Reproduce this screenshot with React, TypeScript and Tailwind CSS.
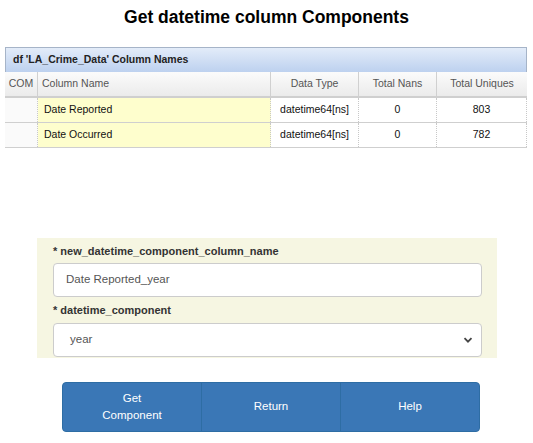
import React from "react";

const rows = [
  { name: "Date Reported", type: "datetime64[ns]", nans: "0", uniq: "803" },
  { name: "Date Occurred", type: "datetime64[ns]", nans: "0", uniq: "782" },
];

export default function App() {
  return (
    <div className="w-[533px] h-[443px] bg-white overflow-hidden" style={{ fontFamily: '"Liberation Sans", Arial, sans-serif' }}>
      <div className="h-[47px] pt-[6px] text-center text-[17.5px] font-bold text-black leading-[22px]">
        Get datetime column Components
      </div>
      <div className="mx-[5px] w-[522px]">
        <div className="h-[25px] border border-b-0 border-[#a6b4c8] bg-gradient-to-b from-[#e3ecf9] to-[#bdd1ef] px-[7px] flex items-center text-[10.5px] font-bold text-[#222]">
          df 'LA_Crime_Data' Column Names
        </div>
        <div className="grid grid-cols-[33px_233px_88px_78px_1fr] h-[26px] bg-gradient-to-b from-[#fbfbfb] to-[#ebebeb] border-b-2 border-[#cfcfcf] text-[10.5px] text-[#555]">
          <div className="flex items-center justify-center border-r border-[#d0d0d0]">COM</div>
          <div className="flex items-center px-[4px] border-r border-[#d0d0d0]">Column Name</div>
          <div className="flex items-center justify-center border-r border-[#d0d0d0]">Data Type</div>
          <div className="flex items-center justify-center border-r border-[#d0d0d0]">Total Nans</div>
          <div className="flex items-center justify-center">Total Uniques</div>
        </div>
        {rows.map((r) => (
          <div key={r.name} className="grid grid-cols-[33px_233px_88px_78px_1fr] h-[25px] border-b border-[#cfcfcf] text-[10.5px] text-[#111]">
            <div className="bg-[#fafafa] border-r border-dotted border-[#c8c8c8]"></div>
            <div className="flex items-center px-[6px] bg-[#fefecd] border-r border-dotted border-[#c8c8c8]">{r.name}</div>
            <div className="flex items-center justify-center border-r border-dotted border-[#c8c8c8]">{r.type}</div>
            <div className="flex items-center justify-center border-r border-dotted border-[#c8c8c8]">{r.nans}</div>
            <div className="flex items-center justify-center border-r border-dotted border-[#c8c8c8]">{r.uniq}</div>
          </div>
        ))}
      </div>
      <div className="h-[90px]"></div>
      <div className="ml-[37px] w-[460px] bg-[#f6f6e2] pl-[16px] pr-[15px] pt-[2px] pb-[1px]">
        <div className="h-[23px] flex items-center text-[11px] font-bold text-[#333]">* new_datetime_component_column_name</div>
        <div className="h-[34px] bg-white border border-[#cccccc] rounded-[4px] flex items-center px-[12px] text-[11.5px] text-[#555]">
          Date Reported_year
        </div>
        <div className="h-[26px] flex items-center text-[11px] font-bold text-[#333]">* datetime_component</div>
        <div className="h-[34px] bg-white border border-[#cccccc] rounded-[4px] flex items-center justify-between pl-[16px] pr-[8px] text-[11.5px] text-[#555]">
          <span>year</span>
          <svg width="10" height="10" viewBox="0 0 10 10">
            <path d="M1.5 3.2 L5 6.7 L8.5 3.2" fill="none" stroke="#444" strokeWidth="1.8" />
          </svg>
        </div>
      </div>
      <div className="h-[24px]"></div>
      <div className="ml-[62px] w-[418px] h-[50px] flex rounded-[4px] overflow-hidden border border-[#2e6da4] bg-[#3a77b6] text-white text-[11.5px]">
        <div className="flex-1 flex items-center justify-center text-center leading-[17px] border-r border-[#2e6da4]">Get<br />Component</div>
        <div className="flex-1 flex items-center justify-center border-r border-[#2e6da4]">Return</div>
        <div className="flex-1 flex items-center justify-center">Help</div>
      </div>
    </div>
  );
}
